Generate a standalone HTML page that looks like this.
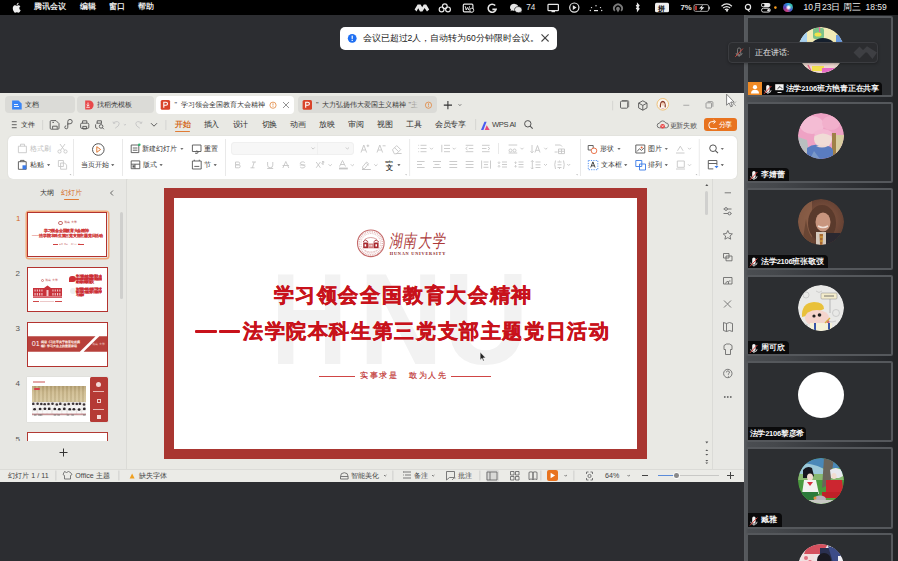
<!DOCTYPE html>
<html><head><meta charset="utf-8">
<style>
*{margin:0;padding:0;box-sizing:border-box}
html,body{width:898px;height:561px;overflow:hidden;background:#2c2d31;font-family:"Liberation Sans",sans-serif}
.a{position:absolute}
.t{position:absolute;white-space:nowrap;line-height:1}
.mb{color:#e8e8e8;font-size:8px;font-weight:bold;top:3.4px}
.tabtxt{font-size:7.1px;color:#333;top:101.5px}
.rt{font-size:7.5px;color:#333;top:121.1px;letter-spacing:-.4px}
.rb{font-size:7px;color:#333}
.r1{top:145.2px}
.r2{top:161px}
.gr{color:#bdbdbd}
.st{font-size:7.1px;color:#444;top:472.6px}
.tab{top:96.2px;height:17px;background:#dbdbd7;border-radius:4px}
.thumb{left:26.5px;width:81.5px;background:#fff;border:1.7px solid #b3332f;overflow:hidden}
.num{font-size:8px;color:#555;left:15.5px}
.tile{left:746.2px;width:146.9px;height:81.5px;background:#2c2e31;border:2px solid #55585c;border-radius:2px;overflow:hidden}
.av{position:absolute;left:49.4px;top:8.9px;width:46px;height:46px;border-radius:50%;overflow:hidden}
.nl{position:absolute;left:0;bottom:0;height:13.2px;background:#0a0a0b;border-top-right-radius:4px;color:#f4f4f4;font-size:7.5px;font-weight:bold;letter-spacing:-.25px;line-height:13.2px;white-space:nowrap;padding-right:5px;padding-left:13px}
.mic{position:absolute;left:3px;top:2.5px}
</style></head><body>
<!-- menubar -->
<div class="a" style="left:0;top:0;width:898px;height:14.5px;background:#000"></div>
<div class="t mb" style="left:33.5px">腾讯会议</div>
<div class="t mb" style="left:80px">编辑</div>
<div class="t mb" style="left:109px">窗口</div>
<div class="t mb" style="left:138px">帮助</div>
<div class="t" style="left:526.3px;top:3.7px;font-size:8.2px;color:#e6e6e6">74</div>
<div class="t" style="left:680.5px;top:4px;font-size:7.8px;color:#e6e6e6;font-weight:bold">7%</div>
<div class="t" style="left:803.5px;top:3px;font-size:8.5px;color:#eee">10月23日 周三&nbsp; 18:59</div>

<div class="a" style="left:783.4px;top:3px;width:9.2px;height:9.2px;border-radius:50%;background:radial-gradient(circle at 55% 50%,#f4f4ff 0 12%,transparent 40%),conic-gradient(from 200deg,#d0407a,#5a3ab0,#2a8ae0,#3ac8b0,#4060d0,#d0407a)"></div>
<!-- toast -->
<div class="a" style="left:340px;top:27px;width:217px;height:23px;background:#fff;border-radius:5px"></div>
<div class="t" style="left:362.5px;top:33.8px;font-size:8.6px;color:#222">会议已超过2人，自动转为60分钟限时会议。</div>

<!-- WPS window -->
<div class="a" style="left:0;top:93px;width:744px;height:389.3px;background:#e9e9e4"></div>
<div class="a tab" style="left:5px;width:69.5px"></div>
<div class="a tab" style="left:77px;width:76.5px"></div>
<div class="a tab" style="left:156.4px;width:138px;background:#fff;height:17.5px"></div>
<div class="a tab" style="left:298px;width:139px"></div>
<div class="t tabtxt" style="left:25px">文档</div>
<div class="t tabtxt" style="left:97px">找稻壳模板</div>
<div class="t tabtxt" style="left:174.5px">"&nbsp;&nbsp;学习领会全国教育大会精神</div>
<div class="t tabtxt" style="left:316px">"&nbsp;&nbsp;大力弘扬伟大爱国主义精神 "主</div>
<div class="a" style="left:404px;top:98px;width:19px;height:13px;background:linear-gradient(90deg,rgba(219,219,215,0),#dbdbd7 85%)"></div>

<div class="t rt" style="left:21.2px;font-size:7.2px;top:121.4px">文件</div>
<div class="t rt" style="left:175px;color:#d4691e;font-weight:bold">开始</div>
<div class="a" style="left:175px;top:130.5px;width:15px;height:1.6px;background:#e07b35;border-radius:1px"></div>
<div class="t rt" style="left:203.5px">插入</div>
<div class="t rt" style="left:232.5px">设计</div>
<div class="t rt" style="left:261.5px">切换</div>
<div class="t rt" style="left:290px">动画</div>
<div class="t rt" style="left:319px">放映</div>
<div class="t rt" style="left:348px">审阅</div>
<div class="t rt" style="left:377px">视图</div>
<div class="t rt" style="left:406px">工具</div>
<div class="t rt" style="left:435.2px">会员专享</div>
<div class="t rt" style="left:492px;font-size:7.6px;top:121.4px;color:#3a3a3a">WPS AI</div>
<div class="t rt" style="left:669.8px;font-size:7px;top:121.5px;color:#555">更新失败</div>
<div class="a" style="left:704.3px;top:117.5px;width:32.8px;height:13.8px;background:#e8731f;border-radius:3px"></div>
<div class="t rt" style="left:718.7px;color:#fff;font-size:7.2px;top:121px">分享</div>

<!-- ribbon -->
<div class="a" style="left:7.5px;top:135.8px;width:729.4px;height:43px;background:#fff;border-radius:5px;box-shadow:0 0 1.5px rgba(0,0,0,.12)"></div>
<div class="a" style="left:230.5px;top:141.7px;width:123px;height:13.6px;background:#f7f7f7;border-radius:3px;border:1px solid #f0f0f0"></div>
<div class="t rb r1 gr" style="left:29.8px">格式刷</div>
<div class="t rb r2" style="left:29.8px">粘贴</div>
<div class="t rb r2" style="left:80.9px">当页开始</div>
<div class="t rb r1" style="left:141.8px">新建幻灯片</div>
<div class="t rb r1" style="left:203.9px">重置</div>
<div class="t rb r2" style="left:142.8px">版式</div>
<div class="t rb r2" style="left:203.9px">节</div>
<div class="t rb r1" style="left:600px">形状</div>
<div class="t rb r1" style="left:647.5px">图片</div>
<div class="t rb r2" style="left:600.6px">文本框</div>
<div class="t rb r2" style="left:647.9px">排列</div>

<!-- left panel -->
<div class="a" style="left:0;top:179px;width:126.5px;height:289.5px;background:#e7e7e3;border-right:1px solid #dbdbd7"></div>
<div class="t" style="left:39.8px;top:189.2px;font-size:7.3px;color:#333">大纲</div>
<div class="t" style="left:60.6px;top:189.2px;font-size:7.3px;color:#d4691e">幻灯片</div>
<div class="a" style="left:64px;top:198.7px;width:14.5px;height:1.5px;background:#e07b35;border-radius:1px"></div>
<div class="a" style="left:119.5px;top:212px;width:3.5px;height:87px;background:#cfcfcd;border-radius:2px"></div>
<!-- thumbnails -->
<div class="t num" style="left:16px;top:214.7px;color:#d4691e">1</div>
<div class="t num" style="top:270px">2</div>
<div class="t num" style="top:325px">3</div>
<div class="t num" style="top:380px">4</div>
<div class="t num" style="top:435.5px">5</div>
<div class="a" style="left:26.6px;top:211.6px;width:81.5px;height:46.4px;box-shadow:0 0 0 1.5px #f2a878;border-radius:2px"></div>
<div class="a thumb" style="left:27.4px;top:212.4px;width:79.9px;height:44.8px;border-width:1.5px">
  <div class="a" style="left:30px;top:7.5px;width:4.4px;height:4.4px;border-radius:50%;border:0.8px solid #c87070"></div>
  <div class="t" style="left:35.5px;top:7.5px;font-size:10px;color:#b84444;transform:scale(.3);transform-origin:0 0;letter-spacing:1px">湖南大学</div>
  <div class="t" style="left:15.5px;top:15.2px;font-size:10px;font-weight:bold;color:#d03a3a;-webkit-text-stroke:.3px #d03a3a;transform:scale(.372);transform-origin:0 0">学习领会全国教育大会精神</div>
  <div class="t" style="left:3.4px;top:21px;font-size:10px;font-weight:bold;color:#d03a3a;-webkit-text-stroke:.3px #d03a3a;transform:scale(.372);transform-origin:0 0">——法学院本科生第三党支部主题党日活动</div>
  <div class="a" style="left:24.5px;top:30.5px;width:5.5px;height:.9px;background:#d04040"></div>
  <div class="t" style="left:30.8px;top:29.5px;font-size:10px;color:#c05050;transform:scale(.2);transform-origin:0 0;letter-spacing:2px">实事求是&nbsp;&nbsp;敢为人先</div>
  <div class="a" style="left:50px;top:30.5px;width:5.5px;height:.9px;background:#d04040"></div>
</div>
<div class="a thumb" style="top:267px;height:45.1px">
  <div class="a" style="left:13.2px;top:10.7px;width:3px;height:3px;border-radius:50%;border:.6px solid #d08080"></div>
  <div class="t" style="left:17px;top:10.5px;font-size:10px;color:#c85858;transform:scale(.3);transform-origin:0 0;letter-spacing:1px">湖南大学</div>
  <svg class="a" style="left:5.5px;top:17px" width="29" height="13" viewBox="0 0 29 13"><path d="M0 3h11l3.5-2.5 3.5 2.5h11v10H0z" fill="#c8323a"/><g fill="#f3c8cc"><rect x="1.5" y="4.5" width="1.1" height="2"/><rect x="3.8" y="4.5" width="1.1" height="2"/><rect x="6.1" y="4.5" width="1.1" height="2"/><rect x="8.4" y="4.5" width="1.1" height="2"/><rect x="19.4" y="4.5" width="1.1" height="2"/><rect x="21.7" y="4.5" width="1.1" height="2"/><rect x="24" y="4.5" width="1.1" height="2"/><rect x="26.3" y="4.5" width="1.1" height="2"/><rect x="1.5" y="8" width="1.1" height="2.5"/><rect x="3.8" y="8" width="1.1" height="2.5"/><rect x="6.1" y="8" width="1.1" height="2.5"/><rect x="8.4" y="8" width="1.1" height="2.5"/><rect x="19.4" y="8" width="1.1" height="2.5"/><rect x="21.7" y="8" width="1.1" height="2.5"/><rect x="24" y="8" width="1.1" height="2.5"/><rect x="26.3" y="8" width="1.1" height="2.5"/><rect x="13.5" y="5" width="2" height="6"/><rect x="0" y="11.5" width="29" height=".8"/></g></svg>
  <div class="a" style="left:5.5px;top:33px;width:6px;height:.9px;background:#d04848"></div>
  <div class="a" style="left:12.5px;top:33px;width:14px;height:.9px;background:#ecc8c8"></div>
  <div class="a" style="left:27.5px;top:33px;width:6.5px;height:.9px;background:#d04848"></div>
  <div class="a" style="left:41.8px;top:8px;width:6.4px;height:6.4px;border-radius:50% 50% 50% 0;background:#cc2f35"></div>
  <div class="t" style="left:48.8px;top:7px;font-size:10px;font-weight:bold;color:#cc2f35;-webkit-text-stroke:1px #cc2f35;transform:scale(.25);transform-origin:0 0;line-height:1.15;white-space:normal;width:104px">学习领会全国教育大会精神深刻理解教育强国建设的重要意义</div>
  <div class="a" style="left:42px;top:20px;width:6px;height:6px;border-radius:50%;background:#eeeeee"></div>
  <div class="t" style="left:48.8px;top:19.8px;font-size:10px;font-weight:bold;color:#cc2f35;-webkit-text-stroke:1px #cc2f35;transform:scale(.25);transform-origin:0 0;line-height:1.15;white-space:normal;width:104px">法学院本科生第三党支部开展主题党日活动学习精神</div>
</div>
<div class="a thumb" style="top:321.8px;height:45.3px">
  <svg class="a" style="left:0;top:0" width="80" height="44" viewBox="0 0 80 44"><path d="M0 13.3H67.5L51.8 28.8H0Z" fill="#b7403b"/><path d="M71.3 13.3H80V28.8H55.6Z" fill="#b7403b"/></svg>
  <div class="t" style="left:4.2px;top:17px;font-size:7.2px;color:#fff">01</div>
  <div class="t" style="left:13.8px;top:17.6px;font-size:10px;color:#f8e0de;-webkit-text-stroke:.6px #f8e0de;transform:scale(.3);transform-origin:0 0;line-height:1.35;white-space:normal;width:140px">阅读《习近平关于教育论述摘编》学习大会上的重要讲话</div>
  <div class="t" style="left:64.5px;top:20.3px;font-size:10px;color:#ecc4c0;transform:scale(.3);transform-origin:0 0;letter-spacing:1px">湖南大学</div>
</div>
<div class="a" style="left:26.8px;top:376.5px;width:81.2px;height:45.6px;background:#fff;box-shadow:0 0 1px rgba(0,0,0,.15)">
  <div class="a" style="left:6.5px;top:4px;width:12px;height:2.5px;background:#e4a8a8"></div>
  <div class="a" style="left:5px;top:9px;width:54px;height:30px;background:linear-gradient(180deg,#b8a374 0%,#cdb98c 20%,#d4c398 45%,#cbb88e 100%)"></div>
  <div class="a" style="left:5px;top:9px;width:54px;height:16px;background:repeating-linear-gradient(90deg,rgba(255,255,255,.1) 0 2px,rgba(0,0,0,.05) 2px 4px)"></div>
  <svg class="a" style="left:5px;top:25px" width="54" height="14" viewBox="0 0 54 14"><rect x="0" y="0" width="54" height="14" fill="#ece8e6"/><circle cx="1.3" cy="1.9" r="1.3" fill="#3c3438"/><ellipse cx="1.3" cy="4.9" rx="1.8" ry="1.8" fill="#f6f4f4"/><circle cx="5.6" cy="1.8" r="1.3" fill="#3c3438"/><ellipse cx="5.6" cy="4.8" rx="1.8" ry="1.8" fill="#f6f4f4"/><circle cx="9.3" cy="2.1" r="1.3" fill="#3c3438"/><ellipse cx="9.3" cy="5.1" rx="1.8" ry="1.8" fill="#f6f4f4"/><circle cx="12.7" cy="2.2" r="1.3" fill="#3c3438"/><ellipse cx="12.7" cy="5.2" rx="1.8" ry="1.8" fill="#f6f4f4"/><circle cx="16.5" cy="2.1" r="1.3" fill="#3c3438"/><ellipse cx="16.5" cy="5.1" rx="1.8" ry="1.8" fill="#f6f4f4"/><circle cx="20.5" cy="1.8" r="1.3" fill="#3c3438"/><ellipse cx="20.5" cy="4.8" rx="1.8" ry="1.8" fill="#f6f4f4"/><circle cx="24.8" cy="2.5" r="1.3" fill="#3c3438"/><ellipse cx="24.8" cy="5.5" rx="1.8" ry="1.8" fill="#f6f4f4"/><circle cx="28.3" cy="1.9" r="1.3" fill="#3c3438"/><ellipse cx="28.3" cy="4.9" rx="1.8" ry="1.8" fill="#f6f4f4"/><circle cx="32.9" cy="2.6" r="1.3" fill="#3c3438"/><ellipse cx="32.9" cy="5.6" rx="1.8" ry="1.8" fill="#f6f4f4"/><circle cx="36.7" cy="2.1" r="1.3" fill="#3c3438"/><ellipse cx="36.7" cy="5.1" rx="1.8" ry="1.8" fill="#f6f4f4"/><circle cx="41.1" cy="1.7" r="1.3" fill="#3c3438"/><ellipse cx="41.1" cy="4.7" rx="1.8" ry="1.8" fill="#f6f4f4"/><circle cx="44.8" cy="2.0" r="1.3" fill="#3c3438"/><ellipse cx="44.8" cy="5.0" rx="1.8" ry="1.8" fill="#f6f4f4"/><circle cx="47.9" cy="1.8" r="1.3" fill="#3c3438"/><ellipse cx="47.9" cy="4.8" rx="1.8" ry="1.8" fill="#f6f4f4"/><circle cx="52.0" cy="2.5" r="1.3" fill="#3c3438"/><ellipse cx="52.0" cy="5.5" rx="1.8" ry="1.8" fill="#f6f4f4"/><circle cx="2.6" cy="7.3" r="1.4" fill="#2e282c"/><ellipse cx="2.6" cy="10.5" rx="2.2" ry="2" fill="#fafafa"/><circle cx="8.1" cy="7.1" r="1.4" fill="#2e282c"/><ellipse cx="8.1" cy="10.3" rx="2.2" ry="2" fill="#fafafa"/><circle cx="12.9" cy="6.8" r="1.4" fill="#2e282c"/><ellipse cx="12.9" cy="10.0" rx="2.2" ry="2" fill="#fafafa"/><circle cx="17.2" cy="6.9" r="1.4" fill="#2e282c"/><ellipse cx="17.2" cy="10.1" rx="2.2" ry="2" fill="#fafafa"/><circle cx="22.8" cy="7.1" r="1.4" fill="#2e282c"/><ellipse cx="22.8" cy="10.3" rx="2.2" ry="2" fill="#fafafa"/><circle cx="27.3" cy="7.3" r="1.4" fill="#2e282c"/><ellipse cx="27.3" cy="10.5" rx="2.2" ry="2" fill="#fafafa"/><circle cx="32.3" cy="7.0" r="1.4" fill="#2e282c"/><ellipse cx="32.3" cy="10.2" rx="2.2" ry="2" fill="#fafafa"/><circle cx="37.7" cy="7.4" r="1.4" fill="#2e282c"/><ellipse cx="37.7" cy="10.6" rx="2.2" ry="2" fill="#fafafa"/><circle cx="41.9" cy="7.3" r="1.4" fill="#2e282c"/><ellipse cx="41.9" cy="10.5" rx="2.2" ry="2" fill="#fafafa"/><circle cx="47.1" cy="7.6" r="1.4" fill="#2e282c"/><ellipse cx="47.1" cy="10.8" rx="2.2" ry="2" fill="#fafafa"/><circle cx="52.3" cy="7.0" r="1.4" fill="#2e282c"/><ellipse cx="52.3" cy="10.2" rx="2.2" ry="2" fill="#fafafa"/><rect x="0" y="11.6" width="54" height="1.2" fill="#a85058" opacity=".7"/><rect x="51.0" y="12.2" width="2.5" height="1.6" fill="#666" opacity=".5"/><rect x="6.1" y="12.2" width="2.5" height="1.6" fill="#666" opacity=".5"/><rect x="21.7" y="12.2" width="2.5" height="1.6" fill="#666" opacity=".5"/><rect x="39.4" y="12.2" width="2.5" height="1.6" fill="#666" opacity=".5"/><rect x="7.9" y="12.2" width="2.5" height="1.6" fill="#666" opacity=".5"/><rect x="25.4" y="12.2" width="2.5" height="1.6" fill="#666" opacity=".5"/><rect x="2.0" y="12.2" width="2.5" height="1.6" fill="#666" opacity=".5"/><rect x="34.7" y="12.2" width="2.5" height="1.6" fill="#666" opacity=".5"/></svg>
  <div class="a" style="left:7px;top:11px;width:6.5px;height:2.8px;background:#d8404a;border-radius:2px"></div>
  <div class="a" style="left:62.8px;top:0;width:18.4px;height:45.6px;background:#b53a35;border-radius:1.5px">
    <div class="a" style="left:6.5px;top:5px;width:5px;height:5px;border-radius:50%;background:#f3d9d7"></div>
    <div class="a" style="left:3.5px;top:14.8px;width:11px;height:1.2px;background:#e8b8b4"></div>
    <div class="a" style="left:7px;top:22.5px;width:4px;height:4px;border:.8px solid #f0d0cc"></div>
    <div class="a" style="left:3.5px;top:32px;width:11px;height:1.2px;background:#e8b8b4"></div>
    <div class="a" style="left:7px;top:38px;width:4px;height:4px;background:#f3d9d7"></div>
  </div>
</div>
<div class="a" style="left:26.7px;top:432.3px;width:81.3px;height:9px;background:#fff;border:1.4px solid #b23a34;border-bottom:none"></div>
<div class="a" style="left:0;top:441.3px;width:126.5px;height:27px;background:#e7e7e3;border-right:1px solid #dbdbd7"></div>
<svg class="a" style="left:59px;top:448px" width="9" height="9" viewBox="0 0 9 9"><path d="M4.5 .5v8M.5 4.5h8" stroke="#333" stroke-width="1"/></svg>

<!-- stage -->
<div class="a" style="left:127.5px;top:179px;width:584px;height:289.5px;background:#e9e9e4"></div>
<div class="a" style="left:711.5px;top:179px;width:33px;height:289.5px;background:#e8e8e4;border-left:1px solid #dbdbd7"></div>
<div class="a" style="left:704.8px;top:191px;width:3.5px;height:23.5px;background:#d0d0ce;border-radius:2px"></div>

<!-- slide -->
<div class="a" style="left:164px;top:188.2px;width:482.5px;height:270.5px;background:#fff;border:10.3px solid #a93631;overflow:hidden">
  <div class="t" style="left:96.5px;top:57px;font-size:129px;font-weight:bold;color:#f2f2f2;transform:scaleX(.82);transform-origin:0 0">H</div>
  <div class="t" style="left:184.5px;top:57px;font-size:129px;font-weight:bold;color:#f2f2f2;transform:scaleX(.9);transform-origin:0 0">N</div>
  <div class="t" style="left:268.5px;top:57px;font-size:129px;font-weight:bold;color:#f2f2f2;transform:scaleX(.92);transform-origin:0 0">U</div>
  <div class="t" style="left:99.5px;top:87.9px;font-size:19.8px;font-weight:bold;color:#c8121b;letter-spacing:1.62px;-webkit-text-stroke:.5px #c8121b">学习领会全国教育大会精神</div>
  <div class="a" style="left:21.4px;top:131.7px;width:21.8px;height:3px;background:#c8121b;border-radius:1px"></div>
  <div class="a" style="left:44.9px;top:131.7px;width:21.6px;height:3px;background:#c8121b;border-radius:1px"></div>
  <div class="t" style="left:69px;top:123.5px;font-size:19.8px;font-weight:bold;color:#c8121b;letter-spacing:1.62px;-webkit-text-stroke:.5px #c8121b">法学院本科生第三党支部主题党日活动</div>
  <div class="a" style="left:145px;top:178.2px;width:36px;height:1.1px;background:#d04545"></div>
  <div class="t" style="left:185.8px;top:174.2px;font-size:7.8px;color:#c03030;letter-spacing:1.75px;-webkit-text-stroke:.15px #c03030">实事求是</div>
  <div class="t" style="left:234.9px;top:174.2px;font-size:7.8px;color:#c03030;letter-spacing:1.75px;-webkit-text-stroke:.15px #c03030">敢为人先</div>
  <div class="a" style="left:277px;top:178.2px;width:39.7px;height:1.1px;background:#d04545"></div>
</div>
<!-- HNU logo on slide -->
<svg class="a" style="left:356px;top:229px" width="30" height="30" viewBox="0 0 30 30">
  <circle cx="14.8" cy="14.3" r="13.3" fill="none" stroke="#c46a6a" stroke-width="1.1"/>
  <circle cx="14.8" cy="14.3" r="9.8" fill="none" stroke="#d69494" stroke-width=".6" stroke-dasharray="1 .8"/>
  <circle cx="14.8" cy="14.3" r="11.6" fill="none" stroke="#e0b0b0" stroke-width="1.6" stroke-dasharray=".8 1"/>
  <path d="M8.5 10.5q6.3-4 12.6 0" fill="none" stroke="#d08a8a" stroke-width=".8"/>
  <path d="M7.2 13.5h5v5.8h-5z M17.6 13.5h5v5.8h-5z" fill="#a82a30"/>
  <path d="M12.2 14.5h5.4v4.8h-5.4z" fill="#d07a7a"/>
  <path d="M8.6 15.2h1.6v2.2H8.6z M19.4 15.2h1.6v2.2h-1.6z M13.5 15.8h1v1.6h-1z M15.3 15.8h1v1.6h-1z" fill="#fff"/>
  <path d="M7 12.8l2.5-1.8 2.7 1.8M17.6 12.8l2.5-1.8 2.7 1.8" fill="none" stroke="#a82a30" stroke-width=".9"/>
  <path d="M9 21.5q5.8 3 11.6 0" fill="none" stroke="#d69494" stroke-width=".8" stroke-dasharray="1 .6"/>
</svg>
<div class="t" style="left:391px;top:231.5px;font-size:13px;color:#ac3a3a;letter-spacing:1.6px;transform:scaleY(1.38) skewX(-12deg);transform-origin:0 0">湖南大学</div>
<div class="t" style="left:389.8px;top:252.4px;font-size:4.3px;color:#8a2222;font-family:'Liberation Serif',serif;font-weight:bold;letter-spacing:.78px">HUNAN UNIVERSITY</div>

<!-- status bar -->
<div class="a" style="left:0;top:468.5px;width:744px;height:13.8px;background:#ebebe7;border-top:1px solid #dbdbd7"></div>
<div class="t st" style="left:8.4px">幻灯片 1 / 11</div>
<div class="t st" style="left:75.3px">Office 主题</div>
<div class="t st" style="left:138.7px">缺失字体</div>
<div class="t st" style="left:350.7px">智能美化</div>
<div class="t st" style="left:413.5px">备注</div>
<div class="t st" style="left:457.7px">批注</div>
<div class="a" style="left:485.5px;top:470px;width:13.3px;height:11.5px;background:#d9d9d7;border-radius:2px"></div>
<div class="a" style="left:547.4px;top:470.3px;width:10.6px;height:10.5px;background:#e8731f;border-radius:2px"></div>
<div class="t st" style="left:605px">64%</div>
<div class="a" style="left:657.6px;top:475px;width:18.5px;height:1.1px;background:#5b8bd9"></div>
<div class="a" style="left:676px;top:475px;width:42.5px;height:1px;background:#c8c8c6"></div>
<div class="a" style="left:674.3px;top:473.2px;width:4.6px;height:4.6px;background:#8a8a8a;border-radius:50%;box-shadow:0 0 0 .8px #fff"></div>

<!-- right panel -->
<div class="a" style="left:744px;top:14.5px;width:154px;height:546.5px;background:linear-gradient(90deg,#5a5d61 0%,#4a4d51 3%,#45484c 20%,#323438 60%,#232528 100%)"></div>
<div class="a" style="left:893px;top:14.5px;width:5px;height:546.5px;background:#222426"></div>
<!-- tiles -->
<div class="a tile" style="top:15.8px">
  <svg class="av" viewBox="0 0 46 46"><defs><clipPath id="c1"><circle cx="23" cy="23" r="23"/></clipPath></defs><g clip-path="url(#c1)">
    <rect width="46" height="46" fill="#f2ebb6"/>
    <rect x="0" y="4" width="9" height="14" fill="#a9d2f0"/><rect x="38" y="8" width="8" height="12" fill="#6b9be0"/>
    <rect x="15" y="1" width="11" height="11" rx="2" fill="#7cc28a"/><ellipse cx="20" cy="7.5" rx="3.5" ry="2" fill="#f2e24a"/><rect x="21" y="0" width="1.2" height="5" fill="#e86a9a"/>
    <rect x="0" y="15" width="46" height="2" fill="#f6f2e8"/>
    <ellipse cx="25" cy="23.5" rx="14" ry="12.5" fill="#16202e"/>
    <rect x="0" y="36" width="46" height="10" fill="#e8d4cc"/><path d="M10 36q13 6 26 0v10H10z" fill="#f0d8d0"/>
    <rect x="14" y="39" width="12" height="5" fill="#f2e04e"/><rect x="24" y="41" width="14" height="6" fill="#e66ac6"/><path d="M10 38l4 8" stroke="#e06a8a" stroke-width="1.5"/>
  </g></svg>
  <div class="nl" style="padding-left:0;height:13.5px;line-height:13.5px;font-size:7.5px;padding-right:3px">
    <span style="display:inline-block;width:14px;height:13.5px;background:#f08a24;vertical-align:top;position:relative;margin-right:23.5px">
      <svg class="a" style="left:2px;top:2px" width="10" height="10" viewBox="0 0 10 10"><circle cx="5" cy="3.2" r="2.1" fill="#fff"/><path d="M1 9.5C1 6.8 2.8 5.8 5 5.8S9 6.8 9 9.5Z" fill="#fff"/></svg>
    </span>法学2106班方艳青正在共享
  </div>
</div>
<div class="a tile" style="top:101.8px">
  <svg class="av" viewBox="0 0 46 46"><defs><clipPath id="c2"><circle cx="23" cy="23" r="23"/></clipPath></defs><g clip-path="url(#c2)">
    <rect width="46" height="46" fill="#eea2c4"/>
    <ellipse cx="14" cy="12" rx="12" ry="9" fill="#f4bcd4"/><ellipse cx="33" cy="10" rx="9" ry="7" fill="#f2b0cc"/>
    <path d="M0 24L9 27L12 46H0Z" fill="#b9bfc0"/>
    <path d="M34 20h4v26h-4z" fill="#a08048"/><path d="M38 22h8v22h-8z" fill="#d8cca0"/>
    <ellipse cx="25" cy="26" rx="9" ry="9" fill="#f0dcd6"/>
    <path d="M16 19Q25 13 34 19L33 23Q25 18 17 23Z" fill="#f3b8d2"/>
    <path d="M9 35Q17 29 25 34Q32 31 35 37V46H9Z" fill="#5a7cc0"/>
    <path d="M18 33q6-3 12 0q-6 3-12 0z" fill="#eed8d2"/>
    <path d="M12 46L16 38L22 46Z" fill="#7a98c8"/>
  </g></svg>
  <div class="nl">李婧蕾</div>
</div>
<div class="a tile" style="top:188.2px">
  <svg class="av" viewBox="0 0 46 46"><defs><clipPath id="c3"><circle cx="23" cy="23" r="23"/></clipPath><radialGradient id="g3" cx="55%" cy="45%" r="60%"><stop offset="0" stop-color="#8a5a44"/><stop offset="1" stop-color="#5a3a2e"/></radialGradient></defs><g clip-path="url(#c3)">
    <rect width="46" height="46" fill="url(#g3)"/>
    <rect x="0" y="0" width="14" height="46" fill="#9a6a50" opacity=".6"/>
    <ellipse cx="24" cy="24" rx="14" ry="18" fill="#5a3a2c"/>
    <ellipse cx="25" cy="23" rx="7.5" ry="9.5" fill="#c8957e"/>
    <path d="M20 27q5 3 10 0" stroke="#f0e0d8" stroke-width="1.5" fill="none"/>
    <path d="M26 34h20v12H26z" fill="#2a2830"/>
    <path d="M18 33h10v13H18z" fill="#d6cabe"/><path d="M21.5 35h3.5l-.5 11h-2.5z" fill="#a86830"/><path d="M22 38h3M22 42h3" stroke="#e0b040" stroke-width="1"/>
    <path d="M8 20Q10 38 18 42L14 46H4Z" fill="#6a4634"/>
  </g></svg>
  <div class="nl">法学2106班张敬弢</div>
</div>
<div class="a tile" style="top:274.5px">
  <svg class="av" viewBox="0 0 46 46"><defs><clipPath id="c4"><circle cx="23" cy="23" r="23"/></clipPath></defs><g clip-path="url(#c4)">
    <rect width="46" height="46" fill="#e9e9e7"/>
    <g stroke="#bbb" stroke-width=".6" fill="none"><circle cx="8" cy="10" r="3"/><circle cx="38" cy="28" r="3.5"/><path d="M30 36q4 2 8 0M4 40q3-2 6 0M18 6q3 3 6 0"/></g>
    <rect x="23" y="8" width="16" height="6" rx="1" fill="#f3eccb" stroke="#888" stroke-width=".5"/>
    <path d="M26 11h10" stroke="#555" stroke-width=".8"/>
    <path d="M32 14v14" stroke="#999" stroke-width=".6"/>
    <path d="M4 32Q3 18 16 17Q26 17 26 24L12 30Z" fill="#e9c13a"/>
    <ellipse cx="19" cy="33" rx="12" ry="8" fill="#f4d4cc"/>
    <circle cx="16" cy="31" r="1.6" fill="#222"/><circle cx="21.5" cy="30" r="1.8" fill="#222"/>
    <ellipse cx="30" cy="37" rx="1.5" ry="2" fill="#d86a70"/>
    <rect x="12" y="38" width="22" height="10" fill="#f6f1d8"/>
    <rect x="16" y="38" width="2" height="10" fill="#3a56a8"/><rect x="30" y="38" width="2" height="10" fill="#3a56a8"/>
    <path d="M27 38l5-5" stroke="#d8b040" stroke-width="1.2"/>
  </g></svg>
  <div class="nl">周可欣</div>
</div>
<div class="a tile" style="top:360.8px">
  <div class="av" style="background:#fff"></div>
  <div class="nl" style="padding-left:1.5px;padding-right:2px">法学2106黎彦希</div>
</div>
<div class="a tile" style="top:447.1px">
  <svg class="av" viewBox="0 0 46 46"><defs><clipPath id="c6"><circle cx="23" cy="23" r="23"/></clipPath></defs><g clip-path="url(#c6)">
    <rect width="46" height="46" fill="#4a9a3e"/>
    <rect width="46" height="10" fill="#4a88b8"/><path d="M0 6Q12 4 24 10T46 8V16H0Z" fill="#9cc8d8"/><path d="M0 16h46v6H0z" fill="#88b870"/>
    <path d="M26 0L36 0L32 26L24 30Z" fill="#6a645a"/>
    <path d="M0 36h46v10H0z" fill="#5aa040"/>
    <path d="M5 12q4-5 9-2l2 8-3 2-8 0z" fill="#16161e"/>
    <ellipse cx="12" cy="19" rx="3" ry="3.5" fill="#f2dcd0"/>
    <path d="M6 22h12l3 14H4z" fill="#f2f2f0"/><path d="M9 24l3 4 3-4z" fill="#d83040"/>
    <path d="M4 34h16l1 8H2z" fill="#2c7a3a"/>
    <path d="M32 12q6-4 11 0l2 6-4 2h-8z" fill="#e8e8ee"/><ellipse cx="36" cy="18" rx="2.6" ry="3" fill="#f2dcd0"/>
    <path d="M28 22h16l2 18H28z" fill="#cc2630"/><path d="M24 34h20v6H24z" fill="#c02028"/>
    <ellipse cx="22" cy="41" rx="6" ry="3.5" fill="#b8b0bc"/><circle cx="17" cy="40" r="1.5" fill="#e89040"/>
    <path d="M2 42h44v4H2z" fill="#c8c8c4"/>
  </g></svg>
  <div class="nl">臧雅</div>
</div>
<div class="a tile" style="top:533.4px">
  <svg class="av" viewBox="0 0 46 46"><defs><clipPath id="c7"><circle cx="23" cy="23" r="23"/></clipPath></defs><g clip-path="url(#c7)">
    <rect width="46" height="46" fill="#ece4e6"/>
    <path d="M10 0h20l-6 10H6z" fill="#d4505e"/><rect x="4" y="10" width="12" height="20" fill="#f2dede"/><circle cx="8" cy="14" r="2" fill="#e07080"/><circle cx="12" cy="18" r="2" fill="#e07080"/>
    <path d="M22 4h20v40H22z" fill="#2a3050"/><path d="M30 2l14 4v18l-8-2z" fill="#3c4c88"/><rect x="40" y="12" width="6" height="12" fill="#f0f0f4"/>
    <ellipse cx="26" cy="16" rx="7" ry="7" fill="#1a1a22"/><ellipse cx="26" cy="21" rx="5" ry="4" fill="#7a5040"/>
  </g></svg>
</div>

<!-- speaking popup -->
<div class="a" style="left:727.6px;top:41.7px;width:150.5px;height:21.2px;background:#2b2c2f;border-radius:4px;border:.8px solid #3b3c40;box-shadow:0 1px 3px rgba(0,0,0,.3)"></div>
<div class="a" style="left:749px;top:47px;width:.8px;height:11px;background:#48494d"></div>
<div class="t" style="left:755px;top:48.8px;font-size:7.8px;color:#e4e4e4">正在讲话:</div>
<svg class="a" style="left:0;top:0" width="898" height="561" viewBox="0 0 898 561">
<!-- apple -->
<g fill="#efefef" transform="translate(3.2,1.4) scale(.8)"><path d="M18.6 3.6c.5-.6.8-1.3.7-2-.6 0-1.4.4-1.8.9-.4.4-.8 1.2-.7 1.9.7.1 1.4-.3 1.8-.8zM19.3 4.7c-1 0-1.8.6-2.3.6-.5 0-1.2-.5-2-.5-1 0-2 .6-2.5 1.5-1.1 1.9-.3 4.7.8 6.2.5.8 1.1 1.6 1.9 1.6.8 0 1-.5 2-.5.9 0 1.2.5 2 .5.8 0 1.3-.8 1.8-1.5.6-.8.8-1.6.8-1.7 0 0-1.6-.6-1.6-2.4 0-1.5 1.2-2.2 1.3-2.3-.7-1-1.8-1.5-2.2-1.5z"/></g>
<!-- menubar status icons -->
<g fill="#e6e6e6" stroke="none">
  <path d="M414.6 9.4L417.6 4.6L420.6 4.6L422.2 7.2L423.8 4.6L426.2 4.6L429.2 9.4L427 11.4L424.6 8L422.4 11.4L420 11.4L418.2 8.2L416.6 11.4Z"/>
</g>
<g fill="none" stroke="#e6e6e6" stroke-width="1.2">
  <circle cx="444.8" cy="6.2" r="2.4"/><circle cx="441.6" cy="9.4" r="2.4"/><circle cx="448" cy="9.4" r="2.4"/>
  <rect x="463.3" y="4.2" width="9.6" height="7.6" rx="1"/><path d="M465.2 6.2l1 3.8 1.2-2.6 1.2 2.6 1-3.8" stroke-width=".9"/>
  
  <circle cx="574.3" cy="7.6" r="4.6"/>
  <path d="M495.2 5.6A4 4 0 1 0 496 9.4H492.4" stroke-width="1.6"/>
  <rect x="548" y="4.3" width="10.4" height="6.4" rx=".8"/>
  <path d="M747.8 9.9l1.8 1.8"/><circle cx="748" cy="7" r="2.6"/>
  <path d="M721.5 6.2Q726.7 1.6 731.9 6.2M723.2 8Q726.7 5.2 730.2 8M724.9 9.8Q726.7 8.6 728.5 9.8"/>
  <path d="M636.2 5.2L639 8.8L637.5 10.8V3.8L639 5.6L636.2 9"/>
</g>
<g fill="#e6e6e6">
  
  <circle cx="471.8" cy="10.2" r="2" fill="#000" stroke="#e6e6e6" stroke-width=".9"/>
  <path d="M510 7.3a4.2 3.5 0 1 1 2 3l-1.5.9.5-1.5a3.5 3 0 0 1-1-2.4z"/>
  <path d="M514.5 9.3a3.8 3.2 0 1 1 6.8 2.4l.5 1.3-1.5-.8a3.8 3.2 0 0 1-5.8-2.9z" stroke="#000" stroke-width=".6"/>
  <path d="M572.8 5.3L576.6 7.6L572.8 9.9Z"/>
  <rect x="551.5" y="11" width="3.5" height="1.2"/>
  <circle cx="596" cy="5.8" r=".7"/><circle cx="591.5" cy="7.6" r=".7"/><circle cx="600.5" cy="7.6" r=".7"/><circle cx="590.3" cy="10.5" r=".7"/><circle cx="601.7" cy="10.5" r=".7"/><rect x="594" y="10" width="4" height="1.2"/>
  <rect x="655" y="2.7" width="14" height="9.6" rx="1.5" fill="#f0f0f0"/>
  <rect x="694" y="4.6" width="14.5" height="6.8" rx="1.5" fill="none" stroke="#bbb" stroke-width=".8"/>
  <rect x="708.8" y="6.6" width="1.1" height="2.8" fill="#bbb"/>
  <rect x="695.2" y="5.8" width="1.6" height="4.4" fill="#e23a30"/>
  <path d="M703 4.4L699 8.4H701.4L700.2 11.6L704.4 7.2H701.9Z"/>
  <circle cx="727" cy="10.8" r="1"/>
  <rect x="761" y="3" width="9.5" height="4.2" rx="2.1" fill="#e6e6e6"/>
  <rect x="761.5" y="8.3" width="8.8" height="3.8" rx="1.9" fill="none" stroke="#e6e6e6" stroke-width=".9"/>
  <circle cx="763.2" cy="5.1" r="1.3" fill="#000"/><circle cx="768.5" cy="10.2" r="1.2" fill="#e6e6e6"/>
  <circle cx="775.4" cy="7.6" r="1.3" fill="#f39a1e"/>
</g>
<path d="M614.2 11.5A4.9 4.9 0 1 1 621.8 11.5L620.5 10.3A3.1 3.1 0 1 0 615.5 10.3Z" fill="#7a7a7a"/><path d="M616.3 9.6A1.9 1.9 0 1 1 619.7 9.6L618 12.6Z" fill="#7a7a7a"/>
<defs><radialGradient id="siri" cx="40%" cy="40%" r="60%"><stop offset="0" stop-color="#e0e0ff"/><stop offset=".4" stop-color="#7a4ad0"/><stop offset=".75" stop-color="#3a6ae0"/><stop offset="1" stop-color="#c03a8a"/></radialGradient></defs>

<text x="658" y="10.6" font-size="7.2" font-weight="bold" fill="#000">拼</text>

<!-- toast icons -->
<circle cx="352.2" cy="38.3" r="4.4" fill="#1f6ff2"/>
<rect x="351.6" y="35.6" width="1.2" height="3.3" fill="#fff"/><rect x="351.6" y="39.8" width="1.2" height="1.2" fill="#fff"/>
<path d="M541.5 34.4L548.6 41.5M548.6 34.4L541.5 41.5" stroke="#444" stroke-width="1.1"/>

<!-- WPS tab icons -->
<path d="M12.1 100.5h6.4l3.2 3v5.9h-9.6z" fill="#3a86f6"/><rect x="14" y="104.1" width="4" height=".9" fill="#fff"/><rect x="14" y="106" width="5" height=".9" fill="#fff"/>
<path d="M85.2 100.5h3.9a4.5 4.5 0 0 1 0 9h-3.9z" fill="#e8484a"/><path d="M88 102.5v3.5M86.6 104.8l1.4 1.4 1.4-1.4M86.3 107.3h3.5" stroke="#fff" stroke-width=".8" fill="none"/>
<rect x="160.7" y="100" width="9.4" height="9.8" rx="1.5" fill="#d9432a"/>
<rect x="302.6" y="100" width="9.4" height="9.8" rx="1.5" fill="#d9432a"/>
<path d="M163.8 107.8V102.2h2.2a1.5 1.5 0 0 1 0 3h-2.2M305.7 107.8V102.2h2.2a1.5 1.5 0 0 1 0 3h-2.2" stroke="#fff" stroke-width="1.1" fill="none"/>
<circle cx="273" cy="105.2" r="3.1" fill="none" stroke="#e2863e" stroke-width=".8"/><rect x="272.6" y="103.3" width=".8" height="2.2" fill="#e2863e"/><rect x="272.6" y="106" width=".8" height=".8" fill="#e2863e"/>
<circle cx="428.5" cy="105.2" r="3.1" fill="none" stroke="#e2863e" stroke-width=".8"/><rect x="428.1" y="103.3" width=".8" height="2.2" fill="#e2863e"/><rect x="428.1" y="106" width=".8" height=".8" fill="#e2863e"/>
<path d="M283 102l6 6M289 102l-6 6" stroke="#888" stroke-width=".9"/>
<path d="M447.9 101v8.2M443.8 105.1h8.2" stroke="#333" stroke-width="1.05"/>
<path d="M458.6 104.3l1.3 1.3 1.3-1.3" stroke="#555" stroke-width=".8" fill="none"/>
<!-- window controls -->
<rect x="620.5" y="101.2" width="7.2" height="7" rx="1" fill="none" stroke="#555" stroke-width=".9"/><path d="M622 100.5h5.5a1.2 1.2 0 0 1 1.2 1.2v5.5" stroke="#555" stroke-width=".7" fill="none"/>
<path d="M642.8 100.8l4.2 2.3v4.8l-4.2 2.3-4.2-2.3v-4.8z M638.6 103.1l4.2 2.3 4.2-2.3 M642.8 105.4v4.8" stroke="#555" stroke-width=".9" fill="none"/>
<circle cx="662.8" cy="104.3" r="5.8" fill="#fbf6f0" stroke="#efc27a" stroke-width="1"/>
<path d="M659.8 107.5q-.3-6.5 3-6.8 3.3.3 3 6.8l-1.2-.3v-3.5h-3.6v3.5z" fill="#8a3a2a"/><circle cx="662.8" cy="104" r="1.7" fill="#f4d0b8"/><path d="M660.8 108.8q2-1.6 4 0z" fill="#e0a0a0"/>
<rect x="683.3" y="104.8" width="6" height=".8" fill="#999"/>
<rect x="706" y="102.8" width="5.5" height="5.2" rx=".6" fill="none" stroke="#888" stroke-width=".8"/><path d="M707.6 101.6h4.3a1 1 0 0 1 1 1v4.2" fill="none" stroke="#888" stroke-width=".8"/>
<path d="M726.6 94.2v11l2.5-2.3 1.7 3.9 1.6-.7-1.7-3.8 3.4-.2z" fill="#fff" stroke="#555" stroke-width=".7"/>
<path d="M731.5 101.5l4.5 4.5M736 101.5l-4.5 4.5" stroke="#999" stroke-width=".8"/>
<!-- toolbar row icons -->
<g stroke="#555" stroke-width=".9" fill="none">
  <path d="M11.8 121.7h4.9M11.8 124.7h4.9M11.8 127.7h4.9"/>
  <path d="M51.2 120.6h4.8l3 3v4.6a1 1 0 0 1-1 1h-6.8a1 1 0 0 1-1-1v-6.6a1 1 0 0 1 1-1z M52.6 128.8v-2.6h4.6v2.6 M52.4 122.4h1.6"/>
  <path d="M67.8 124.6V121.6a2.2 2.2 0 0 1 4.4 0 2.2 2.2 0 0 1-2.2 2.2h-2.2v3.4a1.5 1.5 0 1 1-1.6-1.4"/>
  <path d="M82.6 123.2v-2.4h4.2v2.4 M81.8 123.2h5.8a1.2 1.2 0 0 1 1.2 1.2v2.8a1.2 1.2 0 0 1-1.2 1.2h-5.8a1.2 1.2 0 0 1-1.2-1.2v-2.8a1.2 1.2 0 0 1 1.2-1.2z M82.8 126.4h3.8v2.6h-3.8z"/>
  <path d="M97.2 123.2v-2.4h4.2v2.4 M96.4 123.2h5.6 M95.6 124.4v2.8a1.2 1.2 0 0 0 1.2 1.2h.8"/><circle cx="101.1" cy="126.4" r="1.8"/><path d="M102.4 127.7l1.5 1.5"/>
</g>
<g stroke="#c4c4c4" stroke-width=".9" fill="none">
  <path d="M113.6 122.6Q118.6 120.2 119.2 123.6Q119.4 126 115.2 128.2 M113 121.6l.5 1.8 1.8-.3"/>
  <path d="M123.8 124.2l1.1 1 1.1-1"/>
  <path d="M141.4 122.6Q136.4 120.2 135.8 123.6Q135.6 126 139.8 128.2 M142 121.6l-.5 1.8-1.8-.3"/>
</g>
<path d="M151 123.2l3 3 3-3" stroke="#555" stroke-width=".95" fill="none"/>
<rect x="42.3" y="120" width=".8" height="10" fill="#d0d0ce"/>
<rect x="165.5" y="120" width=".8" height="10" fill="#d0d0ce"/>
<rect x="475.3" y="119" width=".8" height="11" fill="#d0d0ce"/>
<rect x="612.3" y="100.8" width=".8" height="9.5" fill="#d0d0ce"/>
<!-- WPS AI logo -->
<path d="M481 130l3.4-8.3h2.2l-3.2 8.3z" fill="#4a5cf0"/><path d="M484.7 130l2-4.8 3 4.8z" fill="#e8477a"/>
<circle cx="527.8" cy="123.8" r="3.2" fill="none" stroke="#555" stroke-width="1"/><path d="M530.1 126.1l2.6 2.6" stroke="#555" stroke-width="1.1"/>
<!-- update failed icon -->
<path d="M659.5 127.8a2.3 2.3 0 0 1 0-4.6 3.3 3.3 0 0 1 6.2-.2 2.3 2.3 0 0 1 .7 4.8z" fill="none" stroke="#666" stroke-width=".9"/>
<circle cx="662.6" cy="126.2" r="2.3" fill="#e84040"/><path d="M661.6 125.2l2 2M663.6 125.2l-2 2" stroke="#fff" stroke-width=".6"/>
<!-- share icon -->
<path d="M714.5 121.7h-2.8a2.8 2.8 0 0 0-2.8 2.8v1.2a3 3 0 0 0 3 3h5.2 M713.5 120.1l2 1.6-2 1.8" stroke="#fff" stroke-width="1" fill="none"/>
</svg>
<svg class="a" style="left:0;top:0" width="898" height="561" viewBox="0 0 898 561">
<!-- ribbon separators -->
<g fill="#e4e4e4">
  <rect x="73.1" y="139" width=".8" height="37"/><rect x="122.1" y="139" width=".8" height="37"/><rect x="225" y="139" width=".8" height="37"/>
  <rect x="409.3" y="139" width=".8" height="37"/><rect x="580" y="139" width=".8" height="37"/><rect x="698.8" y="139" width=".8" height="37"/>
  <rect x="498.2" y="143" width=".8" height="11"/><rect x="317.3" y="142.5" width=".7" height="12" fill="#ececec"/>
</g>
<!-- clipboard group -->
<g stroke="#c8c8c8" stroke-width=".9" fill="none">
  <path d="M18.4 146.2h8v6.5h-8z M20.5 146.2v-2h4v2"/>
  <circle cx="59.5" cy="151.5" r="1.6"/><circle cx="65.5" cy="151.5" r="1.6"/><path d="M60.5 150.3l4.5-6.3M64.5 150.3l-4.5-6.3"/>
  <path d="M58.4 160.5h5v6h-5z M60.6 163h4l2 2v4.2h-6z"/>
</g>
<g stroke="#555" stroke-width=".9" fill="none">
  <path d="M18.4 161.7h7.8v7.6h-7.8z M20.5 161.7v-1.3h3.6v1.3"/>
  <circle cx="98.3" cy="149.5" r="5.8" stroke="#555" stroke-width="1"/>
  <path d="M131.2 145h7.6v7.6h-7.6z M132.8 148h4.6M132.8 150.2h4.6"/>
  <path d="M192.4 145h8.6v6.5h-8.6z M195 153.2h2.5"/>
  <path d="M131.2 160.9h8.6v7.8h-8.6z M131.2 164.2h8.6M135 164.2v4.5"/>
  <path d="M192.4 161h8.8v8h-8.8z M194.3 161v-1.3M199.3 161v-1.3 M194.3 166.4h5"/>
</g>
<rect x="22.5" y="165.3" width="3.8" height="4" fill="#3a7ae8"/>
<path d="M96.8 146.7l3.8 2.8-3.8 2.8z" fill="none" stroke="#e07b35" stroke-width="1"/>
<circle cx="139.3" cy="144.8" r="1.3" fill="#2eb872"/>
<path d="M196.5 150.5l2 1.5-2 1.5" fill="none" stroke="#555" stroke-width=".8"/>
<rect x="132.5" y="165.3" width="2.2" height="2.3" fill="#555"/>
<g fill="#444">
  <path d="M47 164.3l1.6 1.6 1.6-1.6z"/><path d="M111.1 164.3l1.6 1.6 1.6-1.6z"/>
  <path d="M180.3 148.2l1.6 1.6 1.6-1.6z"/><path d="M159.5 164.3l1.6 1.6 1.6-1.6z"/><path d="M213.6 164.3l1.6 1.6 1.6-1.6z"/>
  <path d="M617.4 148.2l1.6 1.6 1.6-1.6z"/><path d="M664.7 148.2l1.6 1.6 1.6-1.6z"/><path d="M720.7 148.2l1.6 1.6 1.6-1.6z"/>
  <path d="M624.1 164.3l1.6 1.6 1.6-1.6z"/><path d="M664.7 164.3l1.6 1.6 1.6-1.6z"/><path d="M720.7 164.3l1.6 1.6 1.6-1.6z"/>
  <path d="M397.3 164.3l1.6 1.6 1.6-1.6z"/>
</g>
<g fill="#bbb"><path d="M69.5 174l1.6 1.6v-1.6z"/><path d="M405 174l1.6 1.6v-1.6z"/><path d="M576 174l1.6 1.6v-1.6z"/><path d="M695.5 174l1.6 1.6v-1.6z"/></g>
<!-- font group (disabled) -->
<g stroke="#c6c6c6" stroke-width=".9" fill="none">
  <path d="M311.5 147.5l1.6 1.6 1.6-1.6M345.8 147.5l1.6 1.6 1.6-1.6"/>
  <path d="M361 152.5l2.8-7.5 2.8 7.5M362 150h3.6M366.6 145.8h2.6M367.9 144.5v2.6"/>
  <path d="M377 152.5l2.8-7.5 2.8 7.5M378 150h3.6M382.6 145.8h3"/>
  <path d="M392.5 149.8l4.2-4.2 4 4-4.2 4.2h-2.2z M394.5 147.6l4 4 M396 153.5h5.6"/>
  <path d="M235.5 162h2.8a1.4 1.4 0 0 1 0 2.8h-2.8zM235.5 164.8h3.2a1.5 1.5 0 0 1 0 3h-3.2z"/>
  <path d="M252 162h4M250.5 167.8h4M254.2 162l-1.8 5.8"/>
  <path d="M267.6 162v3.2a2.6 2.6 0 0 0 5.2 0V162 M267.2 168.5h6"/>
  <path d="M282.8 168l3-6.5 3 6.5M282.5 165.5h6.5"/>
  <path d="M304.8 162.6a2.5 1.6 0 0 0-4.6.6c0 2 4.8 1.2 4.8 3.2a2.5 1.6 0 0 1-4.8.6 M299.8 165h5.6"/>
  <path d="M316.2 162l4.2 5.8M320.4 162l-4.2 5.8M322 161.5h1.8v1.3h-1.8v1.3h2"/>
  <path d="M328.6 164.3l1.6 1.6 1.6-1.6"/>
  <path d="M339.5 166.5l3-6 3 6M340.6 164.5h3.8"/>
  <path d="M350.8 164.3l1.6 1.6 1.6-1.6"/>
  <path d="M362.6 166.8l4-4.8 2 1.7-4 4.8h-2z M366.5 163.6l2 1.7"/>
  <path d="M374.3 164.3l1.6 1.6 1.6-1.6"/>
</g>
<rect x="339" y="167.6" width="8.8" height="1.8" fill="#c6c6c6"/>
<rect x="362" y="169" width="8.8" height="1" fill="#c6c6c6"/>
<text x="385.2" y="163.2" font-size="4.2" font-weight="bold" fill="#333" letter-spacing="-.2">wén</text><text x="386" y="170" font-size="7" fill="#333" font-weight="bold">文</text>
<!-- paragraph group (disabled) -->
<g stroke="#c6c6c6" stroke-width=".9" fill="none">
  <path d="M420.5 145.3h6M420.5 148.5h6M420.5 151.7h6M418.3 145.3h.8M418.3 148.5h.8M418.3 151.7h.8 M430 147.8l1.5 1.5 1.5-1.5"/>
  <path d="M444 145.3h6M444 148.5h6M444 151.7h6M441.8 144.8v7.4 M452.7 147.8l1.5 1.5 1.5-1.5"/>
  <path d="M465.7 145.3h7.6M468.8 148.5h4.5M465.7 151.7h7.6M467.5 147l-1.8 1.5 1.8 1.5"/>
  <path d="M482 145.3h7.6M482 148.5h4.5M482 151.7h7.6M488 147l1.8 1.5-1.8 1.5"/>
  <path d="M508.6 145h8.6M509 150.5a1.5 1.5 0 1 0 3 0 1.5 1.5 0 1 0-3 0M513 150.5a1.5 1.5 0 1 0 3 0 1.5 1.5 0 1 0-3 0M508.6 153h8.6 M520.5 147.8l1.5 1.5 1.5-1.5"/>
  <path d="M532 145v7.8M530.5 151.3l1.5 1.5 1.5-1.5M535 152.5l2.5-7 2.5 7M535.8 150.3h3.4 M544.3 147.8l1.5 1.5 1.5-1.5"/>
  <path d="M555 145h5.5l1.5 1.5 M554.6 152h3 M558.5 149h6v4.6h-6z M558.5 151.3h6M561.5 149v4.6"/>
  <path d="M417 161.5h7.6M417 164.5h5M417 167.5h7.6"/>
  <path d="M433 161.5h8M434.5 164.5h5M433 167.5h8"/>
  <path d="M449.4 161.5h7.8M449.4 164.5h7.8M449.4 167.5h7.8"/>
  <path d="M465.7 161.5h7.8M465.7 164.5h7.8M465.7 167.5h7.8"/>
  <path d="M481.6 160.5v8.2M490.5 160.5v8.2M483.5 162h5M483.5 167.3h5M484 164.6h4"/>
  <path d="M499 161.5v2M498 162.5l1 1 1-1M499 167.5v-2M498 166.5l1-1 1 1M502 162h5M502 164.5h5M502 167h5"/>
  <path d="M515.6 161.5v2M514.6 162.5l1 1 1-1M515.6 167.5v-2M514.6 166.5l1-1 1 1M518.5 162h5M518.5 164.5h5M518.5 167h5"/>
  <path d="M532.3 160.5v8.5M531 161.8l1.3-1.3 1.3 1.3M531 167.7l1.3 1.3 1.3-1.3M535.5 162h5M535.5 164.8h5M535.5 167.5h5 M544 164l1.5 1.5 1.5-1.5"/>
  <path d="M555.5 160.5q-1.5 4.2 0 8.5M563.5 160.5q1.5 4.2 0 8.5M557.5 162h4M557.5 164.8h4M557.5 167.5h4M559.5 160.5v1M559.5 168v1 M567.2 164l1.5 1.5 1.5-1.5"/>
  <path d="M441 161.5h-1"/>
</g>
<!-- draw group -->
<g stroke="#555" stroke-width=".9" fill="none">
  <path d="M588.2 145.5h5v4.5h-5z"/>
  <path d="M635.8 145h9v8h-9z M637 151.5l2.5-2.8 2 1.8 2.4-2.6"/>
  <path d="M588.3 160.5v9.2h9.5v-9.2z" stroke="#4a8af0" stroke-dasharray="1.2 1.2"/>
  <path d="M590.7 167.5l2.2-5.6 2.2 5.6M591.5 165.8h2.8" stroke="#333"/>
  <path d="M635.8 160.5h6v6h-6z M639.5 164h6v6h-6z" stroke="#3a7ae8"/>
  <circle cx="713" cy="148.2" r="3.3" stroke-width="1"/><path d="M715.4 150.6l2.6 2.6" stroke-width="1.1"/>
  <path d="M708.3 160.5h8.6v5 M708.3 160.5v8.4h5 M708.3 163.5h8.6"/>
</g>
<circle cx="594" cy="150.8" r="2.8" fill="#fff" stroke="#e8673a" stroke-width=".9"/>
<circle cx="641.6" cy="147.5" r="1" fill="#e8673a"/>
<path d="M714.5 166l2 2.3 2-2.3z" fill="#3a7ae8"/>
<g stroke="#c6c6c6" stroke-width=".9" fill="none">
  <path d="M677.5 150.8l2.8-4.6 2.8 4.6 M676 153h8.5"/><path d="M688 147.8l1.5 1.5 1.5-1.5M688 164.3l1.5 1.5 1.5-1.5"/>
  <path d="M677.3 161h7v6.3h-7z M676 169h9"/>
</g>
<!-- left panel collapse -->
<path d="M113 190.5l-2.5 2.5 2.5 2.5" stroke="#555" stroke-width=".9" fill="none"/>
<!-- right tool column -->
<g stroke="#666" stroke-width=".85" fill="none">
  <path d="M724.7 192.8h6.3"/>
  <path d="M723.5 209h8M723.5 213.5h8"/><circle cx="726" cy="209" r="1.4" fill="#e8e8e6"/><circle cx="729.5" cy="213.5" r="1.4" fill="#e8e8e6"/>
  <path d="M727.8 230.5l1.4 3 3.2.4-2.4 2.1.7 3.2-2.9-1.6-2.9 1.6.7-3.2-2.4-2.1 3.2-.4z"/>
  <path d="M723.5 253.5h5.5v4.5h-5.5z M726 256h6v4.8h-6z"/>
  <path d="M723.5 277.5h8.5v6.5h-8.5z M725.5 283.5q1-2.5 2.5-2 M728.5 284v-2.5q1.5-1 2-.5"/>
  <path d="M724 300.5l7 7M731 300.5l-4 4 M724 307.5l2.5-2.5"/>
  <path d="M723.5 322.5l3 1 3-1 3 1v8l-3-1-3 1-3-1z M726.5 323.5v8"/>
  <path d="M724 345.5l2.5-1.5h3l2.5 1.5v4h-1.5v5h-5v-5h-1.5z"/>
  <circle cx="727.8" cy="373.5" r="4.2"/><path d="M726.4 372.4a1.5 1.5 0 1 1 2 1.4v.9"/>
</g>
<g fill="#666"><circle cx="724.8" cy="397" r=".9"/><circle cx="727.8" cy="397" r=".9"/><circle cx="730.8" cy="397" r=".9"/><circle cx="728.4" cy="376.3" r=".5"/></g>
<g fill="#555"><path d="M705.3 186l1.5-2 1.5 2z"/><path d="M705.3 441.5l1.5 2 1.5-2z"/><path d="M705.3 451l1.5-1.5 1.5 1.5zM705.3 454l1.5 1.5 1.5-1.5z"/><path d="M705.3 460l1.5 1.5 1.5-1.5zM705.3 462.5l1.5 1.5 1.5-1.5z"/></g>
<!-- status bar icons -->
<g stroke="#666" stroke-width=".85" fill="none">
  <path d="M64.5 471.5l2 1 2-1 2 1 1.5 2-1.5 1v3.5h-6v-3.5l-1.5-1z"/>
  <path d="M340.5 476.5a3.8 3.8 0 1 1 7.6 0M340.5 476.5h7.6v2.5h-7.6z"/>
  <path d="M403 472h8M405 475h6M403 478h8M403 475h.8M403 472h.5"/>
  <path d="M446.5 471.5h8v6h-5l-3 2.5z"/>
  <path d="M487 472h10v8h-10z M490 472v8"/>
  <path d="M510.5 471.5h3.5v3.5h-3.5z M515.5 471.5h3.5v3.5h-3.5z M510.5 476.5h3.5v3.5h-3.5z M515.5 476.5h3.5v3.5h-3.5z"/>
  <path d="M529 472.3q2-1 4 0v7.2q-2-1-4 0z M533 472.3q2-1 4 0v7.2q-2-1-4 0z"/>
  <path d="M586.5 474v-2h2M592.5 474v-2h-2M586.5 478v2h2M592.5 478v2h-2"/><circle cx="589.5" cy="476" r="1.6"/>
  <path d="M384 475l1.2 1.2 1.2-1.2M432 475l1.2 1.2 1.2-1.2M564.5 475l1.2 1.2 1.2-1.2M627.5 475l1.2 1.2 1.2-1.2"/>
</g>
<path d="M129.6 478.6l2.5-5 2.5 5z" fill="#f0a020"/>
<path d="M454 478l1.5 0M452 480l2-2" stroke="#666" stroke-width=".7"/>
<path d="M550.6 472.8l4.5 2.7-4.5 2.7z" fill="#fff"/>
<g fill="#c8c8c6"><rect x="55.5" y="470.5" width=".8" height="10"/><rect x="118.5" y="470.5" width=".8" height="10"/><rect x="392.5" y="470.5" width=".8" height="10"/><rect x="479.5" y="470.5" width=".8" height="10"/><rect x="540.5" y="470.5" width=".8" height="10"/><rect x="573.5" y="470.5" width=".8" height="10"/></g>
<path d="M642 475.5h6M727 475.5h7M730.5 472v7" stroke="#444" stroke-width="1"/>
<!-- tile mic icons -->
<defs><g id="micg"><path d="M752.2 172.6a1.7 1.7 0 0 1 3.4 0v3.8a1.7 1.7 0 0 1-3.4 0z" fill="#f4f4f4"/><path d="M750.7 176.2q0 2.6 3.2 2.6 3.2 0 3.2-2.6 M753.9 178.8v1.2" stroke="#f4f4f4" stroke-width=".8" fill="none"/><path d="M750 179.8l7.4-7.8" stroke="#d9403a" stroke-width="1"/></g></defs>
<use href="#micg" transform="translate(0,0)"/><use href="#micg" transform="translate(0,86.5)"/><use href="#micg" transform="translate(0,173)"/><use href="#micg" transform="translate(0,345.6)"/>
<use href="#micg" transform="translate(14,-86)"/>
<path d="M775.2 84.2h8.4v6h-8.4z" fill="#f4f4f4"/><path d="M777.5 92.5h4" stroke="#f4f4f4" stroke-width=".9"/><path d="M777.5 88.8l2.5-2.2 2.2 2.2" stroke="#0a0a0b" stroke-width=".8" fill="none"/>

<!-- speaking popup icon & watermark -->
<path d="M737.5 49.5a1.6 1.6 0 0 1 3.2 0v3.8a1.6 1.6 0 0 1-3.2 0z M736 53q0 2.5 3.1 2.5 3.1 0 3.1-2.5 M739.1 55.5v1.5" stroke="#8a8a8a" stroke-width=".8" fill="none"/>
<path d="M735.3 56.8l7.6-8.2" stroke="#d94a40" stroke-width=".9"/>
<path d="M853.5 52.5l6-6 6 6-6 6z M860.5 52.5l6.5-6.3 10 6.3-4.5 6.5-5.5-6.5z" fill="#3e3f43"/>
<!-- cursor on slide -->
<path d="M480.2 352.3v7.6l1.8-1.6 1.2 2.8 1-.5-1.2-2.7 2.5-.1z" fill="#222" stroke="#fff" stroke-width=".4"/>
</svg>
</body></html>
